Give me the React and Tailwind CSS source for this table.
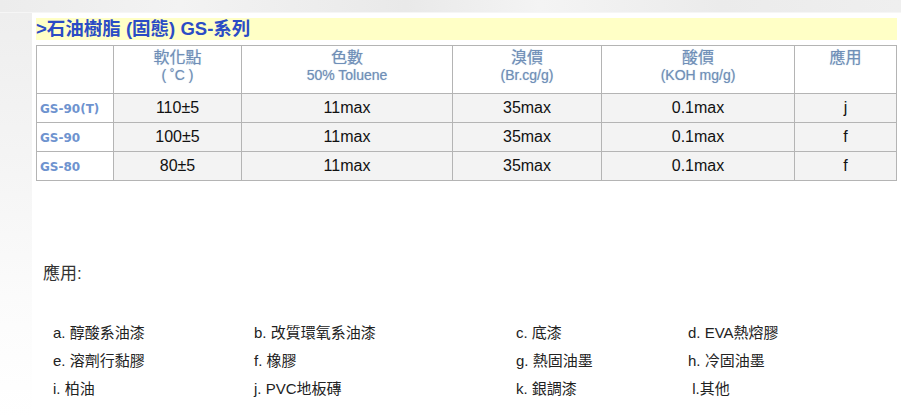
import React from 'react'

const cjk = '"Liberation Sans", "Noto Sans CJK TC", sans-serif'

const rows = [
  { id: 'GS-90(T)', soft: '110±5', color: '11max', br: '35max', acid: '0.1max', use: 'j' },
  { id: 'GS-90', soft: '100±5', color: '11max', br: '35max', acid: '0.1max', use: 'f' },
  { id: 'GS-80', soft: '80±5', color: '11max', br: '35max', acid: '0.1max', use: 'f' },
]

const uses = [
  'a. 醇酸系油漆', 'b. 改質環氧系油漆', 'c. 底漆', 'd. EVA熱熔膠',
  'e. 溶劑行黏膠', 'f. 橡膠', 'g. 熱固油墨', 'h. 冷固油墨',
  'i. 柏油', 'j. PVC地板磚', 'k. 銀調漆', ' l.其他',
]

function HeadCell({ title, sub }) {
  return (
    <th className="border border-[#b4b4b4] align-top pt-[3px] font-normal text-[#6f8fb8] [text-shadow:0_0_1px_rgba(111,143,184,0.6)]">
      <div className="text-[16px] leading-[18px]">{title}</div>
      {sub && <div className="text-[14px] leading-[17px]">{sub}</div>}
    </th>
  )
}

export default function App() {
  return (
    <div className="w-[901px] h-[417px] overflow-hidden bg-white flex flex-col" style={{ fontFamily: cjk }}>
      {/* top background strip */}
      <div className="h-[13px] shrink-0 bg-[linear-gradient(90deg,#ececec_0%,#f3f3f3_20%,#e9e9e9_45%,#f4f4f4_60%,#ebebeb_80%,#efefef_100%)] border-b border-[#f6f6f6]" />

      <div className="flex flex-1">
        {/* left faded column */}
        <div className="w-[32px] shrink-0 bg-[linear-gradient(180deg,#eeeeee_0%,#f5f5f5_40%,#fbfbfb_70%,#ffffff_100%)]" />

        <div className="flex-1 pl-[4px] pr-[6px] pt-[5px]">
          <div className="h-[22px] bg-[#ffffc6] flex items-center">
            <span className="text-[18.5px] font-bold text-[#2b4cc5] leading-none">&gt;石油樹脂 (固態) GS-系列</span>
          </div>

          <table className="mt-[5px] w-[860px] border-collapse table-fixed">
            <colgroup>
              <col className="w-[77px]" />
              <col className="w-[128px]" />
              <col className="w-[211px]" />
              <col className="w-[149px]" />
              <col className="w-[193px]" />
              <col className="w-[102px]" />
            </colgroup>
            <thead>
              <tr className="h-[48px]">
                <th className="border border-[#b4b4b4]" />
                <HeadCell title="軟化點" sub="( ˚C )" />
                <HeadCell title="色數" sub="50% Toluene" />
                <HeadCell title="溴價" sub="(Br.cg/g)" />
                <HeadCell title="酸價" sub="(KOH mg/g)" />
                <HeadCell title="應用" />
              </tr>
            </thead>
            <tbody>
              {rows.map((r) => (
                <tr key={r.id} className="h-[29px] text-[16px] text-[#111]">
                  <td className="border border-[#b4b4b4] bg-white align-top pl-[3px] pt-[2px]">
                    <span className="text-[12px] font-bold text-[#6e93cf]" style={{ fontFamily: '"DejaVu Sans", sans-serif' }}>{r.id}</span>
                  </td>
                  <td className="border border-[#b4b4b4] bg-[#f3f3f3] text-center">{r.soft}</td>
                  <td className="border border-[#b4b4b4] bg-[#f3f3f3] text-center">{r.color}</td>
                  <td className="border border-[#b4b4b4] bg-[#f3f3f3] text-center">{r.br}</td>
                  <td className="border border-[#b4b4b4] bg-[#f3f3f3] text-center">{r.acid}</td>
                  <td className="border border-[#b4b4b4] bg-[#f3f3f3] text-center">{r.use}</td>
                </tr>
              ))}
            </tbody>
          </table>

          <div className="mt-[84px] ml-[7px] text-[17px] text-[#333] leading-none">應用:</div>

          <div className="mt-[41px] ml-[17px] grid grid-cols-[201px_262px_172px_1fr] gap-y-[9px] text-[15px] text-[#222] leading-[19px]">
            {uses.map((u) => (
              <div key={u} className="whitespace-pre">{u}</div>
            ))}
          </div>
        </div>
      </div>
    </div>
  )
}
